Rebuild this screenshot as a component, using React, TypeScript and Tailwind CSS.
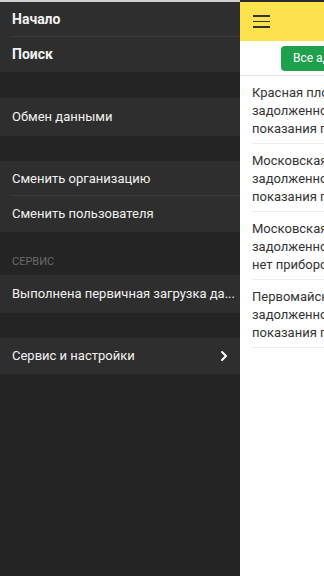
import { ChevronRight } from "lucide-react";

const font = { fontFamily: 'Roboto, "Liberation Sans", Arial, sans-serif' };

function DrawerItem({
  label,
  bold,
  chevron,
  divider,
  h = "h-[35px]",
}: {
  label: string;
  bold?: boolean;
  chevron?: boolean;
  divider?: boolean;
  h?: string;
}) {
  return (
    <div className={`relative flex ${h} items-center bg-[#2e2e2e] pl-3 pr-[8px]`}>
      <span
        className={`flex-1 whitespace-nowrap text-[#f2f2f2] ${bold ? "text-[14px] font-bold" : "text-[13px]"}`}
      >
        {label}
      </span>
      {chevron && <ChevronRight className="h-4 w-4 text-white" strokeWidth={3} />}
      {divider && <div className="absolute bottom-0 left-3 right-0 h-px bg-[#3c3c3c]" />}
    </div>
  );
}

const rows = [
  ["Красная площадь, 1", "задолженность 0 руб.", "показания переданы"],
  ["Московская, 12", "задолженность 120 руб.", "показания переданы"],
  ["Московская, 14", "задолженность 0 руб.", "нет приборов учета"],
  ["Первомайская, 5", "задолженность 0 руб.", "показания переданы"],
];

export default function App() {
  return (
    <div className="flex h-[576px] w-[324px] flex-col overflow-hidden bg-white" style={font}>
      <div className="flex h-[2px] shrink-0">
        <div className="w-[240px] bg-[#cfcfcf]" />
        <div className="flex-1 bg-[#2a2a2a]" />
      </div>
      <div className="flex min-h-0 flex-1">
        {/* drawer */}
        <aside className="flex w-[240px] shrink-0 flex-col bg-[#242424]">
          <DrawerItem label="Начало" bold divider />
          <DrawerItem label="Поиск" bold />
          <div className="h-[26px]" />
          <DrawerItem label="Обмен данными" h="h-[38px]" />
          <div className="h-[25px]" />
          <DrawerItem label="Сменить организацию" divider />
          <DrawerItem label="Сменить пользователя" h="h-[36px]" />
          <div className="flex h-[43px] items-end pb-[5px] pl-3">
            <span className="text-[11px] text-[#6a6a6a]">СЕРВИС</span>
          </div>
          <DrawerItem label="Выполнена первичная загрузка да..." h="h-[38px]" />
          <div className="h-[25px]" />
          <DrawerItem label="Сервис и настройки" chevron h="h-[36px]" />
        </aside>

        {/* main */}
        <main className="flex min-w-0 flex-1 flex-col overflow-hidden">
          <header className="flex h-[39px] shrink-0 items-center bg-[#fde24f] pl-[13px]">
            <div className="flex w-[17px] flex-col gap-[4px]">
              <span className="h-[1.5px] bg-[#333]" />
              <span className="h-[1.5px] bg-[#333]" />
              <span className="h-[1.5px] bg-[#333]" />
            </div>
          </header>
          <div className="flex h-[35px] shrink-0 items-center border-b border-[#e6e6e6] pl-[41px]">
            <div className="flex h-[25px] items-center whitespace-nowrap rounded-[4px] bg-[#1fa04b] pl-3 pr-3 text-[12px] text-white">
              Все адреса
            </div>
          </div>
          <div className="pl-3">
            {rows.map((r, i) => (
              <div
                key={i}
                className="whitespace-nowrap border-b border-[#ececec] pb-[5px] pt-[8px] text-[13px] leading-[18px] text-[#333]"
              >
                {r.map((t) => (
                  <div key={t}>{t}</div>
                ))}
              </div>
            ))}
          </div>
        </main>
      </div>
    </div>
  );
}
